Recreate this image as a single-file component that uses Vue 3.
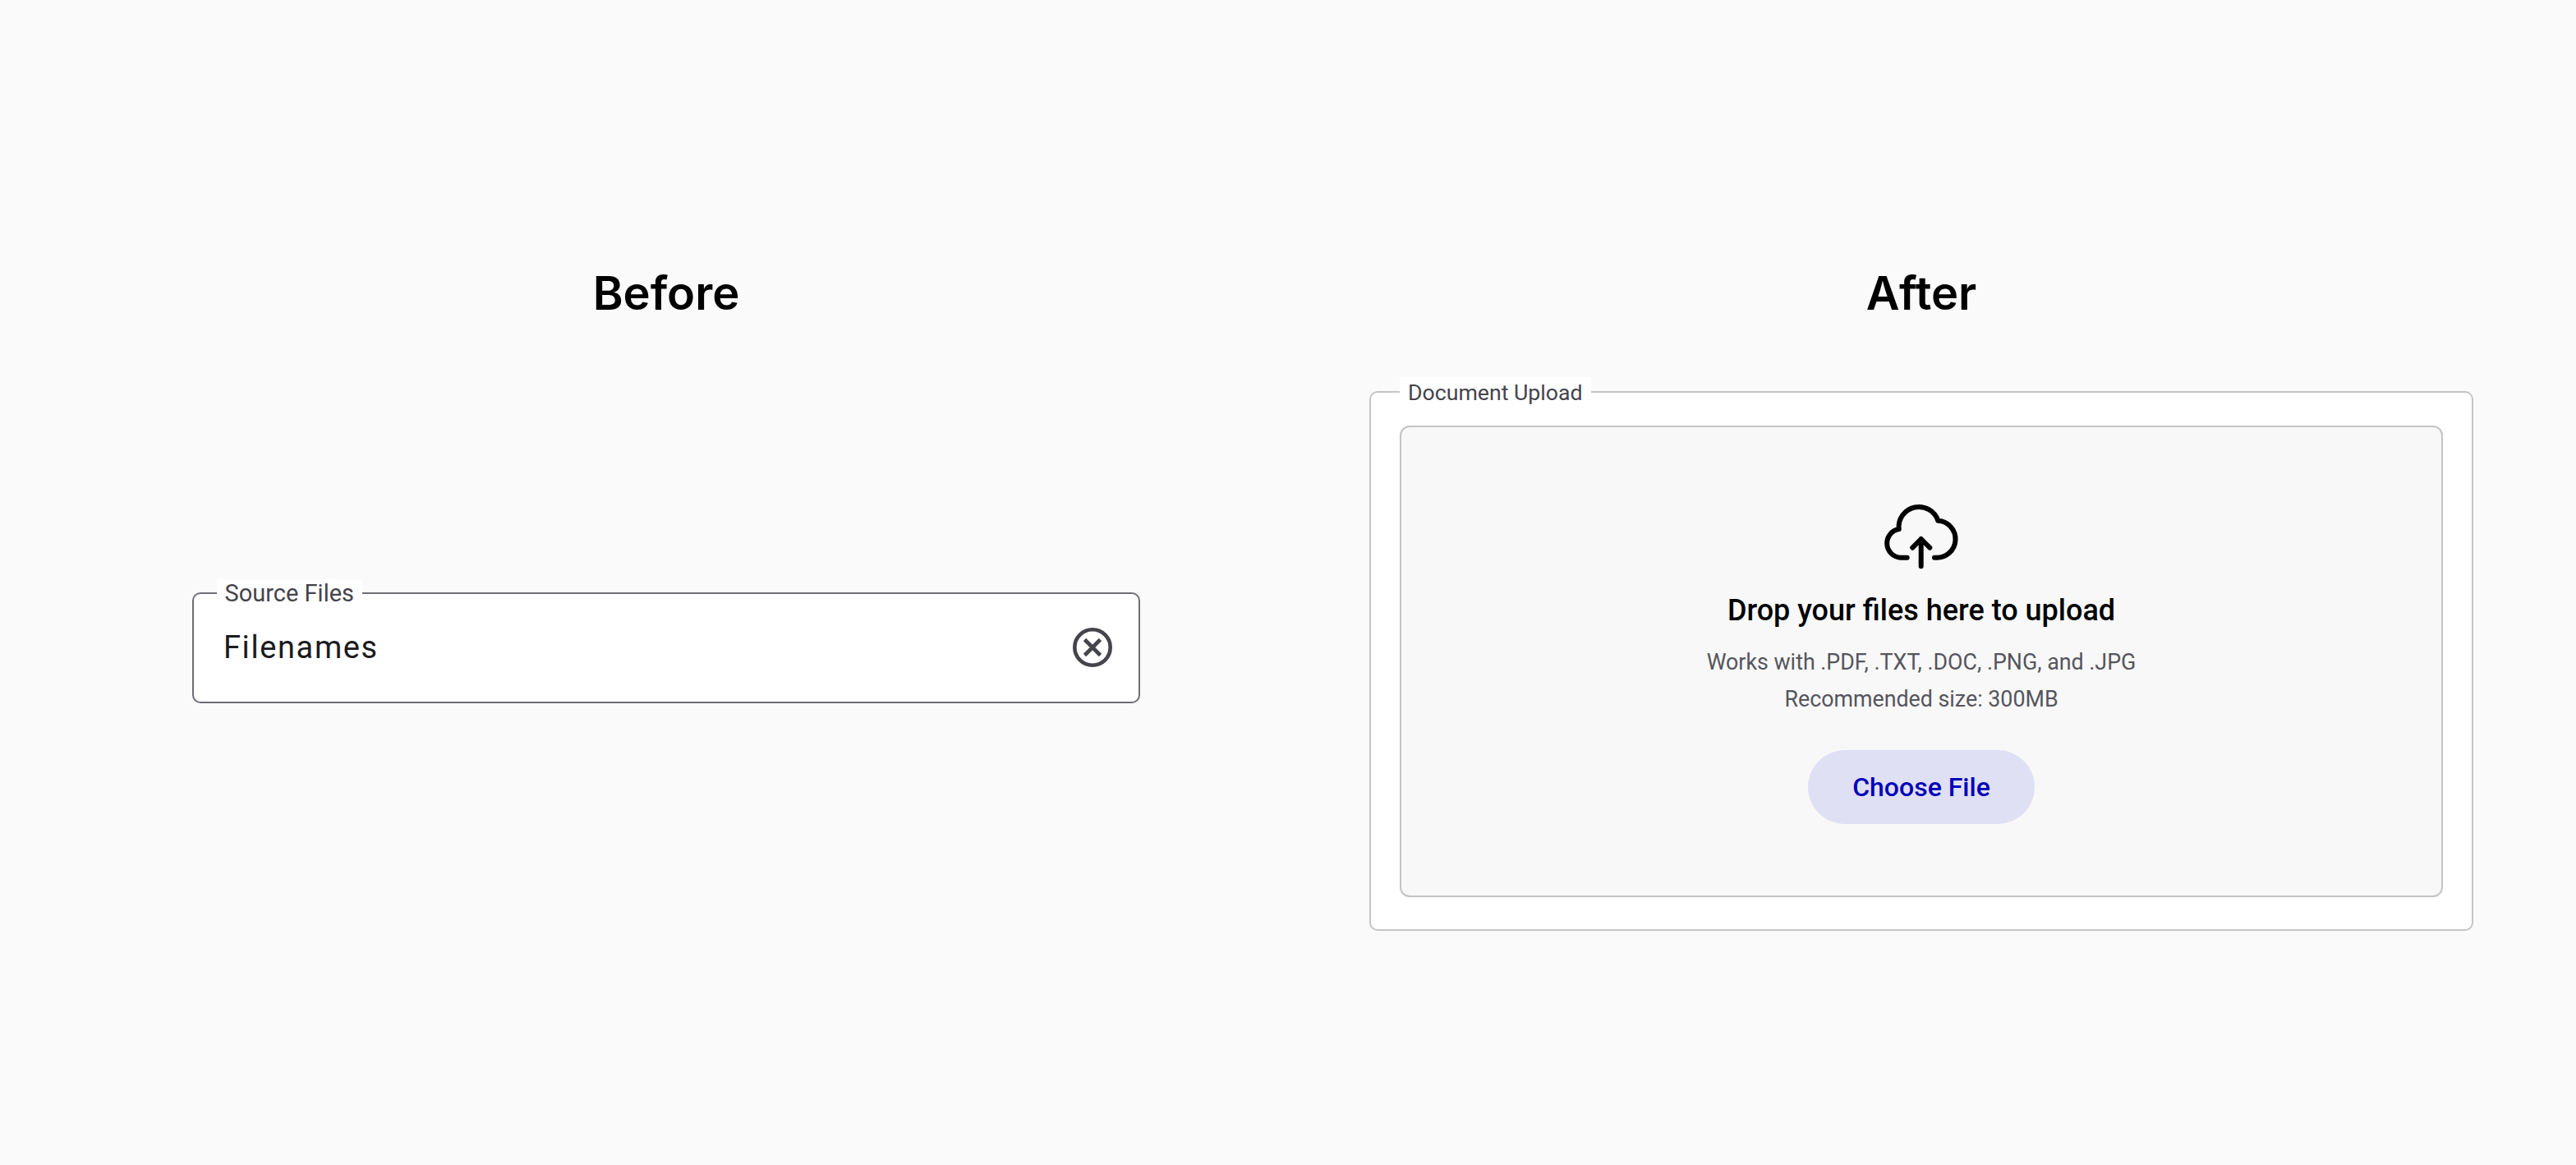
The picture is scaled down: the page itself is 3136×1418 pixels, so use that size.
<template>
  <main class="page">
    <!-- Before -->
    <section class="col col-before">
      <h2 class="col-title">Before</h2>
      <fieldset class="source-field">
        <legend>Source Files</legend>
        <span class="source-value">Filenames</span>
        <svg class="clear-icon" viewBox="0 0 48 48" width="48" height="48" fill="none" stroke="#44444c" aria-hidden="true">
          <circle cx="24" cy="24" r="21.7" stroke-width="4.6" />
          <path d="M14.5 14.5 L33.5 33.5 M33.5 14.5 L14.5 33.5" stroke-width="4.6" />
        </svg>
      </fieldset>
    </section>

    <!-- After -->
    <section class="col col-after">
      <h2 class="col-title">After</h2>
      <fieldset class="upload-field">
        <legend>Document Upload</legend>
        <div class="dropzone">
          <svg class="cloud-icon" viewBox="0 0 100 88" width="100" height="88" fill="none" stroke="#000" stroke-width="6" stroke-linecap="round" stroke-linejoin="round" aria-hidden="true">
            <path d="M31.7 69.7 H23.5 A17.5 17.5 0 0 1 21.7 35 A24.5 24.5 0 0 1 69.3 24.7 A22.5 22.5 0 0 1 66.7 69.7 H65" />
            <path d="M48.7 80.3 V47 M38.3 57.7 L48.7 47 L59.3 57.7" />
          </svg>
          <p class="drop-title">Drop your files here to upload</p>
          <p class="drop-hint">Works with .PDF, .TXT, .DOC, .PNG, and .JPG</p>
          <p class="drop-hint">Recommended size: 300MB</p>
          <button class="choose-btn" type="button">Choose File</button>
        </div>
      </fieldset>
    </section>
  </main>
</template>

<script setup>
</script>

<style>
html,
body {
  margin: 0;
  background: #fafafa;
}
</style>

<style scoped>
.page {
  height: 1418px;
  box-sizing: border-box;
  padding: 322px 125px 0 234px;
  display: grid;
  grid-template-columns: 1154px 1344px;
  column-gap: 279px;
  align-items: start;
  font-family: Roboto, sans-serif;
  background: #fafafa;
}

.col-title {
  margin: 0;
  font-family: Inter, sans-serif;
  font-size: 56px;
  line-height: 70px;
  font-weight: 600;
  color: #000;
  text-align: center;
}

fieldset {
  margin: 0;
  min-width: 0;
  background: #fff;
  border-radius: 10px;
}

legend {
  line-height: 34px;
  color: #44444c;
  background: #fff;
}

.source-field {
  margin-top: 313px;
  height: 151px;
  box-sizing: border-box;
  padding: 0 32px 0 36px;
  border: 2px solid #6f6d75;
  display: flex;
  align-items: center;
  justify-content: space-between;
}

.source-field legend {
  margin-left: -8px;
  padding: 0 9.5px;
  font-size: 29px;
}

.source-value {
  font-size: 38px;
  letter-spacing: 1.6px;
  color: #1b1b1f;
  margin-top: -18px;
}

.clear-icon {
  margin-top: -18px;
  flex: none;
}

.upload-field {
  margin-top: 67px;
  padding: 23px 35px 39px;
  border: 2px solid #c4c4c4;
}

.upload-field legend {
  padding: 2px 10px 0;
  font-size: 26.7px;
}

.dropzone {
  box-sizing: border-box;
  height: 574px;
  border: 2px solid #c4c4c4;
  border-radius: 12px;
  background: #f8f8f8;
  display: flex;
  flex-direction: column;
  align-items: center;
  padding-top: 89px;
}

.cloud-icon {
  margin-left: 2px;
}

.drop-title {
  margin: 24px 0 19px;
  font-size: 36px;
  line-height: 44px;
  font-weight: 500;
  color: #000;
}

.drop-hint {
  margin: 0;
  font-size: 26.8px;
  line-height: 45px;
  color: #55555d;
}

.choose-btn {
  margin-top: 39px;
  width: 276px;
  height: 90px;
  border: none;
  border-radius: 45px;
  background: #e0e0f5;
  color: #0000b8;
  font-family: inherit;
  font-size: 32px;
  font-weight: 500;
}
</style>
